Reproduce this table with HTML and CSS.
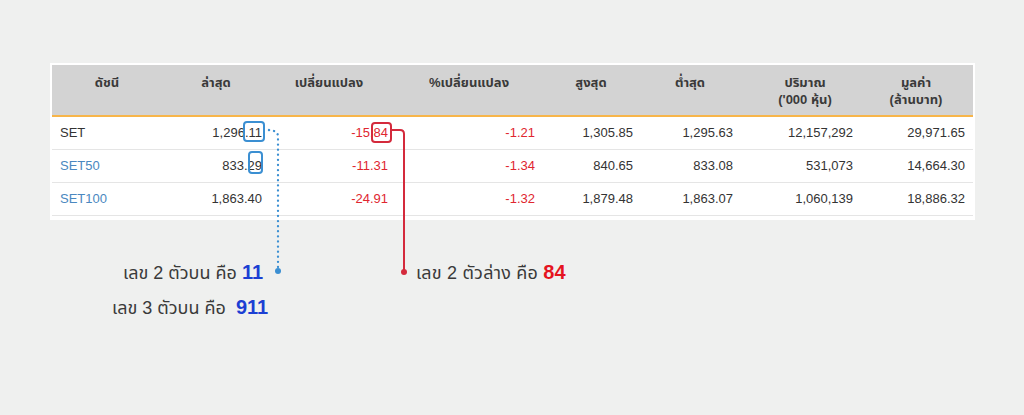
FILE: index.html
```html
<!DOCTYPE html>
<html lang="th">
<head>
<meta charset="utf-8">
<title>SET index</title>
<link rel="stylesheet" href="styles.css">
</head>
<body>
<div class="stage">
  <div class="table">
    <div class="row head">
      <div class="th c1">ดัชนี</div>
      <div class="th c2">ล่าสุด</div>
      <div class="th c3">เปลี่ยนแปลง</div>
      <div class="th c4">%เปลี่ยนแปลง</div>
      <div class="th c5">สูงสุด</div>
      <div class="th c6">ต่ำสุด</div>
      <div class="th c7">ปริมาณ<br>('000 หุ้น)</div>
      <div class="th c8">มูลค่า<br>(ล้านบาท)</div>
    </div>
    <div class="row">
      <div class="td name">SET</div>
      <div class="td">1,296.11</div>
      <div class="td neg">-15.84</div>
      <div class="td neg">-1.21</div>
      <div class="td">1,305.85</div>
      <div class="td">1,295.63</div>
      <div class="td">12,157,292</div>
      <div class="td last">29,971.65</div>
    </div>
    <div class="row">
      <div class="td name link">SET50</div>
      <div class="td">833.29</div>
      <div class="td neg">-11.31</div>
      <div class="td neg">-1.34</div>
      <div class="td">840.65</div>
      <div class="td">833.08</div>
      <div class="td">531,073</div>
      <div class="td last">14,664.30</div>
    </div>
    <div class="row">
      <div class="td name link">SET100</div>
      <div class="td">1,863.40</div>
      <div class="td neg">-24.91</div>
      <div class="td neg">-1.32</div>
      <div class="td">1,879.48</div>
      <div class="td">1,863.07</div>
      <div class="td">1,060,139</div>
      <div class="td last">18,886.32</div>
    </div>
  </div>

  <div class="notes">
    <div class="note-col left">
      <div class="note n1">เลข 2 ตัวบน คือ <b class="blue">11</b></div>
      <div class="note n2">เลข 3 ตัวบน คือ&nbsp; <b class="blue">911</b></div>
    </div>
    <div class="note-col right">
      <div class="note n3">เลข 2 ตัวล่าง คือ <b class="red">84</b></div>
    </div>
  </div>

  <svg class="overlay" width="1024" height="415" viewBox="0 0 1024 415" aria-hidden="true">
    <rect x="244" y="122" width="20" height="19" rx="3" fill="none" stroke="#3b8fd2" stroke-width="2"/>
    <rect x="249" y="152" width="13" height="21" rx="3" fill="none" stroke="#3b8fd2" stroke-width="2"/>
    <path d="M269 130 L274 131 Q278 132 278 137 L278 268" fill="none" stroke="#3b8fd2" stroke-width="2.3" stroke-linecap="round" stroke-dasharray="0.1 5"/>
    <circle cx="278" cy="271" r="3" fill="#3b8fd2"/>
    <rect x="372" y="123" width="19" height="19" rx="3" fill="none" stroke="#d42a3c" stroke-width="2"/>
    <path d="M391 130 L400 130 Q404 130 404 134 L404 270" fill="none" stroke="#d42a3c" stroke-width="2"/>
    <circle cx="404" cy="272" r="3" fill="#d42a3c"/>
  </svg>
</div>
</body>
</html>
```

FILE: styles.css
```css
html, body {
  margin: 0;
  padding: 0;
}
body {
  background: #eff0ef;
  font-family: "Liberation Sans", Arial, "Noto Sans Thai", "Noto Sans", sans-serif;
  width: 1024px;
  height: 415px;
  overflow: hidden;
}
.stage {
  position: relative;
  padding: 63px 0 0 50px;
}
.table {
  width: 921px;
  background: #fff;
  padding: 2px 2px 4px 2px;
}
.row {
  display: grid;
  grid-template-columns: 108px 112px 126px 147px 98px 100px 120px 110px;
  border-bottom: 1px solid #e5e5e5;
}
.row.head {
  background: #d3d3d3;
  border-bottom: 2px solid #f7b54a;
  height: 50px;
}
.th {
  font-weight: bold;
  font-size: 13px;
  color: #3a3a3a;
  text-align: center;
  line-height: 17px;
  padding-top: 9px;
}
.th.c1 { padding-left: 2px; }
.th.c3 { padding-right: 12px; }
.th.c4 { padding-right: 5px; }
.th.c5 { padding-right: 6px; }
.th.c6 { padding-right: 6px; }
.th.c7 { padding-left: 4px; }
.th.c8 { padding-right: 4px; }
.td {
  font-size: 13px;
  color: #333;
  text-align: right;
  padding-right: 10px;
  height: 32px;
  line-height: 32px;
}
.td.last { padding-right: 8px; }
.td.name {
  text-align: left;
  padding-left: 8px;
  padding-right: 0;
}
.td.link { color: #4a88c0; }
.td.neg { color: #e0262f; }

.notes {
  display: flex;
  margin-top: 35px;
}
.note-col.left {
  width: 366px;
}
.note {
  font-size: 18px;
  line-height: 34px;
  color: #3a3a3a;
  white-space: nowrap;
}
.note b { font-weight: bold; font-size: 20px; }
.note .blue { color: #1c3fd3; }
.note .red { color: #e5141f; }
.n1 { padding-left: 73px; }
.n2 { padding-left: 62px; }
.n3 { letter-spacing: 0.2px; }
.overlay {
  position: absolute;
  left: 0;
  top: 0;
  pointer-events: none;
}
```
